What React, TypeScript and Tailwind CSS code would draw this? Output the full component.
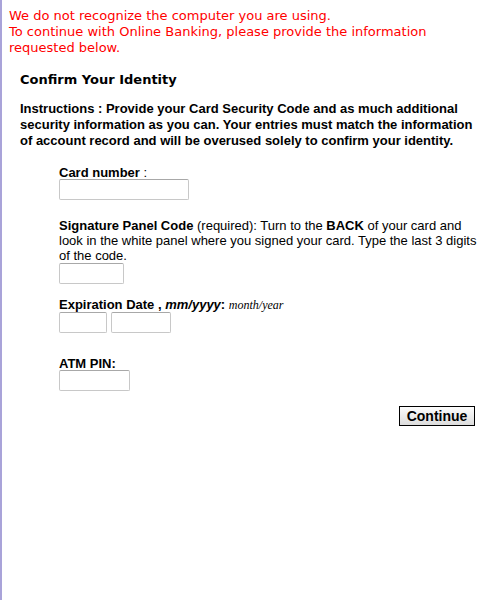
import React from "react";

const Field = ({ w }: { w: string }) => (
  <input
    type="text"
    className={`block h-[21px] ${w} border border-[#c8c8c8] border-t-[#a8a8a8] rounded-[2px] bg-white`}
  />
);

const App = () => {
  return (
    <div className="min-h-[600px] w-[501px] bg-white border-l-2 border-[#a9a3d9] text-black">
      <div className="ml-[7px] w-[460px] pt-[8px] text-[13px] leading-[16px] text-[#ff0000] font-['DejaVu_Sans',Verdana,sans-serif]">
        We do not recognize the computer you are using.
        <br />
        To continue with Online Banking, please provide the information
        requested below.
      </div>

      <div className="pl-[18px] pr-[10px]">
        <h2 className="mt-[16px] text-[13px] leading-[16px] font-bold font-['DejaVu_Sans',Verdana,sans-serif]">
          Confirm Your Identity
        </h2>
        <p className="mt-[13px] w-[462px] text-[13px] leading-[16px] font-bold font-['Liberation_Sans',Arial,sans-serif]">
          Instructions : Provide your Card Security Code and as much additional
          security information as you can. Your entries must match the
          information of account record and will be overused solely to confirm
          your identity.
        </p>

        <div className="pl-[39px] pr-[10px] text-[13px] leading-[16px] font-['Liberation_Sans',Arial,sans-serif]">
          <div className="mt-[17px] leading-[13px]">
            <b>Card number</b> :
          </div>
          <Field w="w-[130px]" />

          <div className="mt-[18px] leading-[15px]">
            <b>Signature Panel Code</b> (required): Turn to the <b>BACK</b> of
            your card and look in the white panel where you signed your card.
            Type the last 3 digits of the code.
          </div>
          <Field w="w-[65px]" />

          <div className="mt-[14px] leading-[13px]">
            <b>Expiration Date , </b>
            <b className="italic">mm/yyyy</b>
            <b>:</b>{" "}
            <span className="italic text-[12px] font-['Liberation_Serif','Times_New_Roman',serif]">
              month/year
            </span>
          </div>
          <div className="flex gap-[4px]">
            <Field w="w-[48px]" />
            <Field w="w-[60px]" />
          </div>

          <div className="mt-[25px] leading-[12px] font-bold">ATM PIN:</div>
          <Field w="w-[71px]" />

          <div className="flex justify-end mt-[15px] pr-[6px]">
            <button className="h-[20px] w-[76px] border border-black bg-gradient-to-b from-[#fdfdfd] to-[#dcdcdc] text-[14px] leading-[16px] font-bold">
              Continue
            </button>
          </div>
        </div>
      </div>
    </div>
  );
};

export default App;
